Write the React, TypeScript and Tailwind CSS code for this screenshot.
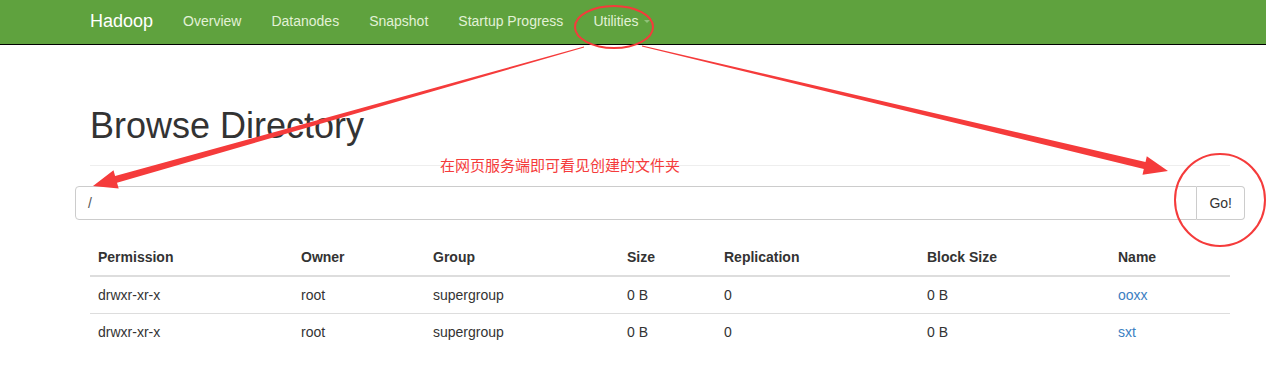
import React from 'react';

const navLinks = ['Overview', 'Datanodes', 'Snapshot', 'Startup Progress', 'Utilities'];

const rows = [
  { perm: 'drwxr-xr-x', owner: 'root', group: 'supergroup', size: '0 B', repl: '0', block: '0 B', name: 'ooxx' },
  { perm: 'drwxr-xr-x', owner: 'root', group: 'supergroup', size: '0 B', repl: '0', block: '0 B', name: 'sxt' },
];

const headers = ['Permission', 'Owner', 'Group', 'Size', 'Replication', 'Block Size', 'Name'];
const widths = [203, 132, 194, 97, 203, 191, 120];

// tapered annotation arrow: thin at the start, thick near the head
function arrowPoints(x1: number, y1: number, x2: number, y2: number, w1: number, w2: number, headLen: number, headW: number) {
  const dx = x2 - x1;
  const dy = y2 - y1;
  const len = Math.sqrt(dx * dx + dy * dy);
  const ux = dx / len;
  const uy = dy / len;
  const nx = -uy;
  const ny = ux;
  const bx = x2 - ux * headLen;
  const by = y2 - uy * headLen;
  const pts = [
    [x1 + (nx * w1) / 2, y1 + (ny * w1) / 2],
    [bx + (nx * w2) / 2, by + (ny * w2) / 2],
    [bx + (nx * headW) / 2, by + (ny * headW) / 2],
    [x2, y2],
    [bx - (nx * headW) / 2, by - (ny * headW) / 2],
    [bx - (nx * w2) / 2, by - (ny * w2) / 2],
    [x1 - (nx * w1) / 2, y1 - (ny * w1) / 2],
  ];
  return pts.map((p) => `${p[0].toFixed(1)},${p[1].toFixed(1)}`).join(' ');
}

const Annotations: React.FC = () => (
  <div className="pointer-events-none absolute inset-0">
    <svg width="1266" height="368" className="absolute left-0 top-0">
      <ellipse cx="614" cy="27" rx="39" ry="21" fill="none" stroke="#f53b3b" strokeWidth="2" />
      <polygon points={arrowPoints(584, 47, 93, 186, 1, 7, 24, 19)} fill="#f53b3b" />
      <polygon points={arrowPoints(642, 46, 1168, 171, 1, 7, 24, 19)} fill="#f53b3b" />
      <ellipse cx="1220" cy="200" rx="45" ry="46" fill="none" stroke="#f53b3b" strokeWidth="2" />
    </svg>
    <div className="absolute left-[440px] top-[156px] text-[15px] leading-[18px] text-[#f53b3b] [font-family:'Noto_Sans_CJK_SC','Liberation_Sans',sans-serif]">
      在网页服务端即可看见创建的文件夹
    </div>
  </div>
);

export default function App() {
  return (
    <div className="relative h-[368px] w-[1266px] overflow-hidden bg-white text-[14px] leading-[20px] text-[#333] [font-family:'Liberation_Sans',Arial,sans-serif]">
      <nav className="h-[45px] border-b border-black bg-[#5fa23e]">
        <div className="ml-[75px] flex h-[44px] items-center pb-[3px]">
          <span className="px-[15px] text-[18px] text-white">Hadoop</span>
          {navLinks.map((l) => (
            <span key={l} className="flex items-center px-[15px] text-[#e2f1d6]">
              {l}
              {l === 'Utilities' && (
                <span className="ml-[5px] mt-[2px] h-0 w-0 border-x-[3px] border-t-[3px] border-x-transparent border-t-[#8fc27a]" />
              )}
            </span>
          ))}
        </div>
      </nav>

      <div className="ml-[75px] w-[1170px] px-[15px]">
        <div className="mt-[61px] border-b border-[#eee] pb-[19px]">
          <h1 className="text-[36px] leading-[40px] text-[#333]">Browse Directory</h1>
        </div>

        <div className="-mx-[15px] mt-[20px] flex h-[34px]">
          <div className="flex flex-1 items-center rounded-l-[4px] border border-[#ccc] px-[12px] text-[#555]">/</div>
          <button className="rounded-r-[4px] border border-l-0 border-[#ccc] bg-white px-[12px] text-[#333]">Go!</button>
        </div>

        <table className="mt-[19px] w-[1140px] table-fixed border-collapse">
          <colgroup>
            {widths.map((w, i) => (
              <col key={i} style={{ width: w }} />
            ))}
          </colgroup>
          <thead>
            <tr className="border-b-2 border-[#ddd]">
              {headers.map((h) => (
                <th key={h} className="p-[8px] text-left font-bold">
                  {h}
                </th>
              ))}
            </tr>
          </thead>
          <tbody>
            {rows.map((r, i) => (
              <tr key={r.name} className={i === 0 ? 'border-b border-[#ddd]' : ''}>
                <td className="p-[8px]">{r.perm}</td>
                <td className="p-[8px]">{r.owner}</td>
                <td className="p-[8px]">{r.group}</td>
                <td className="p-[8px]">{r.size}</td>
                <td className="p-[8px]">{r.repl}</td>
                <td className="p-[8px]">{r.block}</td>
                <td className="p-[8px] text-[#3b80c2]">{r.name}</td>
              </tr>
            ))}
          </tbody>
        </table>
      </div>

      <Annotations />
    </div>
  );
}
